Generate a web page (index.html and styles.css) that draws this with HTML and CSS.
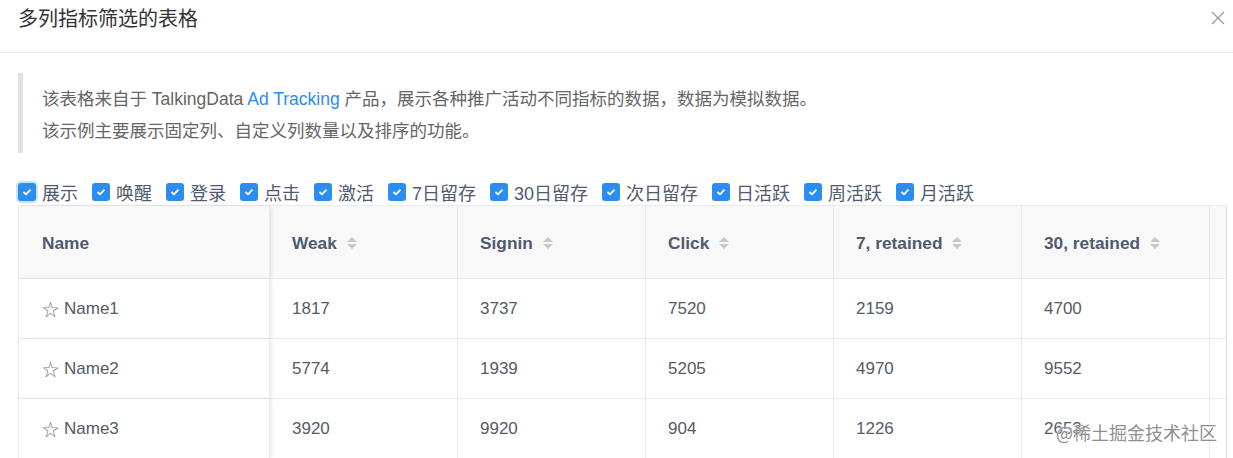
FILE: index.html
```html
<!DOCTYPE html>
<html lang="zh">
<head>
<meta charset="utf-8">
<title>多列指标筛选的表格</title>
<link rel="stylesheet" href="styles.css">
</head>
<body>
<div class="modal">
  <div class="modal-header">
    <div class="modal-title">多列指标筛选的表格</div>
    <svg class="close" width="14" height="14" viewBox="0 0 14 14"><path d="M1 1 L13 13 M13 1 L1 13" stroke="#999" stroke-width="1.3" fill="none"/></svg>
  </div>
  <div class="modal-body">
    <blockquote class="note">
      <p>该表格来自于 TalkingData <a class="link">Ad Tracking</a> 产品，展示各种推广活动不同指标的数据，数据为模拟数据。</p>
      <p>该示例主要展示固定列、自定义列数量以及排序的功能。</p>
    </blockquote>
    <div class="checks">
      <label class="check focus"><span class="box"><svg width="10" height="8" viewBox="0 0 10 8"><path d="M1.5 4 L4 6.3 L8.5 1.7" stroke="#fff" stroke-width="1.8" fill="none"/></svg></span><span class="lbl">展示</span></label>
      <label class="check"><span class="box"><svg width="10" height="8" viewBox="0 0 10 8"><path d="M1.5 4 L4 6.3 L8.5 1.7" stroke="#fff" stroke-width="1.8" fill="none"/></svg></span><span class="lbl">唤醒</span></label>
      <label class="check"><span class="box"><svg width="10" height="8" viewBox="0 0 10 8"><path d="M1.5 4 L4 6.3 L8.5 1.7" stroke="#fff" stroke-width="1.8" fill="none"/></svg></span><span class="lbl">登录</span></label>
      <label class="check"><span class="box"><svg width="10" height="8" viewBox="0 0 10 8"><path d="M1.5 4 L4 6.3 L8.5 1.7" stroke="#fff" stroke-width="1.8" fill="none"/></svg></span><span class="lbl">点击</span></label>
      <label class="check"><span class="box"><svg width="10" height="8" viewBox="0 0 10 8"><path d="M1.5 4 L4 6.3 L8.5 1.7" stroke="#fff" stroke-width="1.8" fill="none"/></svg></span><span class="lbl">激活</span></label>
      <label class="check"><span class="box"><svg width="10" height="8" viewBox="0 0 10 8"><path d="M1.5 4 L4 6.3 L8.5 1.7" stroke="#fff" stroke-width="1.8" fill="none"/></svg></span><span class="lbl">7日留存</span></label>
      <label class="check"><span class="box"><svg width="10" height="8" viewBox="0 0 10 8"><path d="M1.5 4 L4 6.3 L8.5 1.7" stroke="#fff" stroke-width="1.8" fill="none"/></svg></span><span class="lbl">30日留存</span></label>
      <label class="check"><span class="box"><svg width="10" height="8" viewBox="0 0 10 8"><path d="M1.5 4 L4 6.3 L8.5 1.7" stroke="#fff" stroke-width="1.8" fill="none"/></svg></span><span class="lbl">次日留存</span></label>
      <label class="check"><span class="box"><svg width="10" height="8" viewBox="0 0 10 8"><path d="M1.5 4 L4 6.3 L8.5 1.7" stroke="#fff" stroke-width="1.8" fill="none"/></svg></span><span class="lbl">日活跃</span></label>
      <label class="check"><span class="box"><svg width="10" height="8" viewBox="0 0 10 8"><path d="M1.5 4 L4 6.3 L8.5 1.7" stroke="#fff" stroke-width="1.8" fill="none"/></svg></span><span class="lbl">周活跃</span></label>
      <label class="check"><span class="box"><svg width="10" height="8" viewBox="0 0 10 8"><path d="M1.5 4 L4 6.3 L8.5 1.7" stroke="#fff" stroke-width="1.8" fill="none"/></svg></span><span class="lbl">月活跃</span></label>
    </div>
    <div class="table">
      <div class="cell th first">Name</div>
      <div class="cell th">Weak<span class="sort"><i class="up"></i><i class="down"></i></span></div>
      <div class="cell th">Signin<span class="sort"><i class="up"></i><i class="down"></i></span></div>
      <div class="cell th">Click<span class="sort"><i class="up"></i><i class="down"></i></span></div>
      <div class="cell th">7, retained<span class="sort"><i class="up"></i><i class="down"></i></span></div>
      <div class="cell th">30, retained<span class="sort"><i class="up"></i><i class="down"></i></span></div>
      <div class="cell th gutter"></div>

      <div class="cell first"><span class="star">☆</span>Name1</div>
      <div class="cell">1817</div><div class="cell">3737</div><div class="cell">7520</div><div class="cell">2159</div><div class="cell">4700</div><div class="cell gutter"></div>

      <div class="cell first"><span class="star">☆</span>Name2</div>
      <div class="cell">5774</div><div class="cell">1939</div><div class="cell">5205</div><div class="cell">4970</div><div class="cell">9552</div><div class="cell gutter"></div>

      <div class="cell first"><span class="star">☆</span>Name3</div>
      <div class="cell">3920</div><div class="cell">9920</div><div class="cell">904</div><div class="cell">1226</div><div class="cell">2653</div><div class="cell gutter"></div>
    </div>
  </div>
  <div class="watermark">@稀土掘金技术社区</div>
</div>
</body>
</html>
```

FILE: styles.css
```css
* { box-sizing: border-box; }
html, body {
  margin: 0;
  padding: 0;
  background: #fff;
  overflow: hidden;
}
body {
  font-family: "Liberation Sans", "Noto Sans CJK SC", sans-serif;
  color: #515a6e;
  width: 1233px;
  height: 458px;
}
.modal {
  position: relative;
  height: 458px;
  overflow: hidden;
}
.modal-header {
  height: 53px;
  border-bottom: 1px solid #e8eaec;
  display: flex;
  justify-content: space-between;
  align-items: flex-start;
  padding: 0 8px 0 18px;
}
.modal-title {
  font-size: 20px;
  line-height: 38px;
  color: #333;
}
.close {
  margin-top: 11px;
}
.modal-body {
  padding: 20px 0 0 18px;
}
.note {
  margin: 0;
  border-left: 5px solid #e2e2e2;
  padding: 10px 0 6px 19px;
  font-size: 17.5px;
  line-height: 32px;
  color: #666;
}
.note p { margin: 0; }
.link { color: #2d8cf0; text-decoration: none; }
.checks {
  display: flex;
  align-items: center;
  height: 24px;
  margin-top: 27px;
  margin-bottom: 1px;
}
.check {
  display: flex;
  align-items: center;
  margin-right: 14px;
  font-size: 18px;
  color: #515a6e;
}
.box {
  width: 18px;
  height: 18px;
  border-radius: 3px;
  background: #2d8cf0;
  display: flex;
  align-items: center;
  justify-content: center;
}
.check.focus .box {
  box-shadow: 0 0 0 2px rgba(45, 140, 240, 0.25);
}
.lbl { margin-left: 6px; }
.table {
  display: grid;
  grid-template-columns: 251px repeat(5, 188px) 17px;
  grid-template-rows: 73px 60px 60px 60px;
  width: 1209px;
  border-left: 1px solid #e8eaec;
  border-top: 1px solid #e8eaec;
}
.cell {
  border-right: 1px solid #e8eaec;
  border-bottom: 1px solid #e8eaec;
  display: flex;
  align-items: center;
  padding: 0 22px;
  font-size: 17px;
  color: #555b66;
  background: #fff;
  white-space: nowrap;
}
.th {
  background: #f8f8f9;
  font-weight: bold;
  font-size: 17.3px;
  color: #515a6e;
  padding-top: 2px;
}
.first {
  padding-left: 23px;
  position: relative;
  z-index: 2;
  box-shadow: 2px 0 5px -1px rgba(0, 0, 0, 0.12);
}
.gutter {
  padding: 0;
  border-right-color: #dcdee2;
}
.star {
  font-size: 17px;
  color: #777;
  margin-right: 5px;
}
.sort {
  display: inline-flex;
  flex-direction: column;
  margin-left: 10px;
  gap: 2px;
}
.sort i {
  display: block;
  width: 0;
  height: 0;
  border-left: 5px solid transparent;
  border-right: 5px solid transparent;
}
.sort .up { border-bottom: 5px solid #c5c8ce; }
.sort .down { border-top: 5px solid #c5c8ce; }
.watermark {
  position: absolute;
  right: 16px;
  bottom: 13px;
  font-size: 18px;
  color: #8f8f8f;
  text-shadow: 0 0 2px #fff, 0 0 1px #fff;
  font-family: "Noto Sans CJK SC", sans-serif;
  z-index: 5;
}
```
